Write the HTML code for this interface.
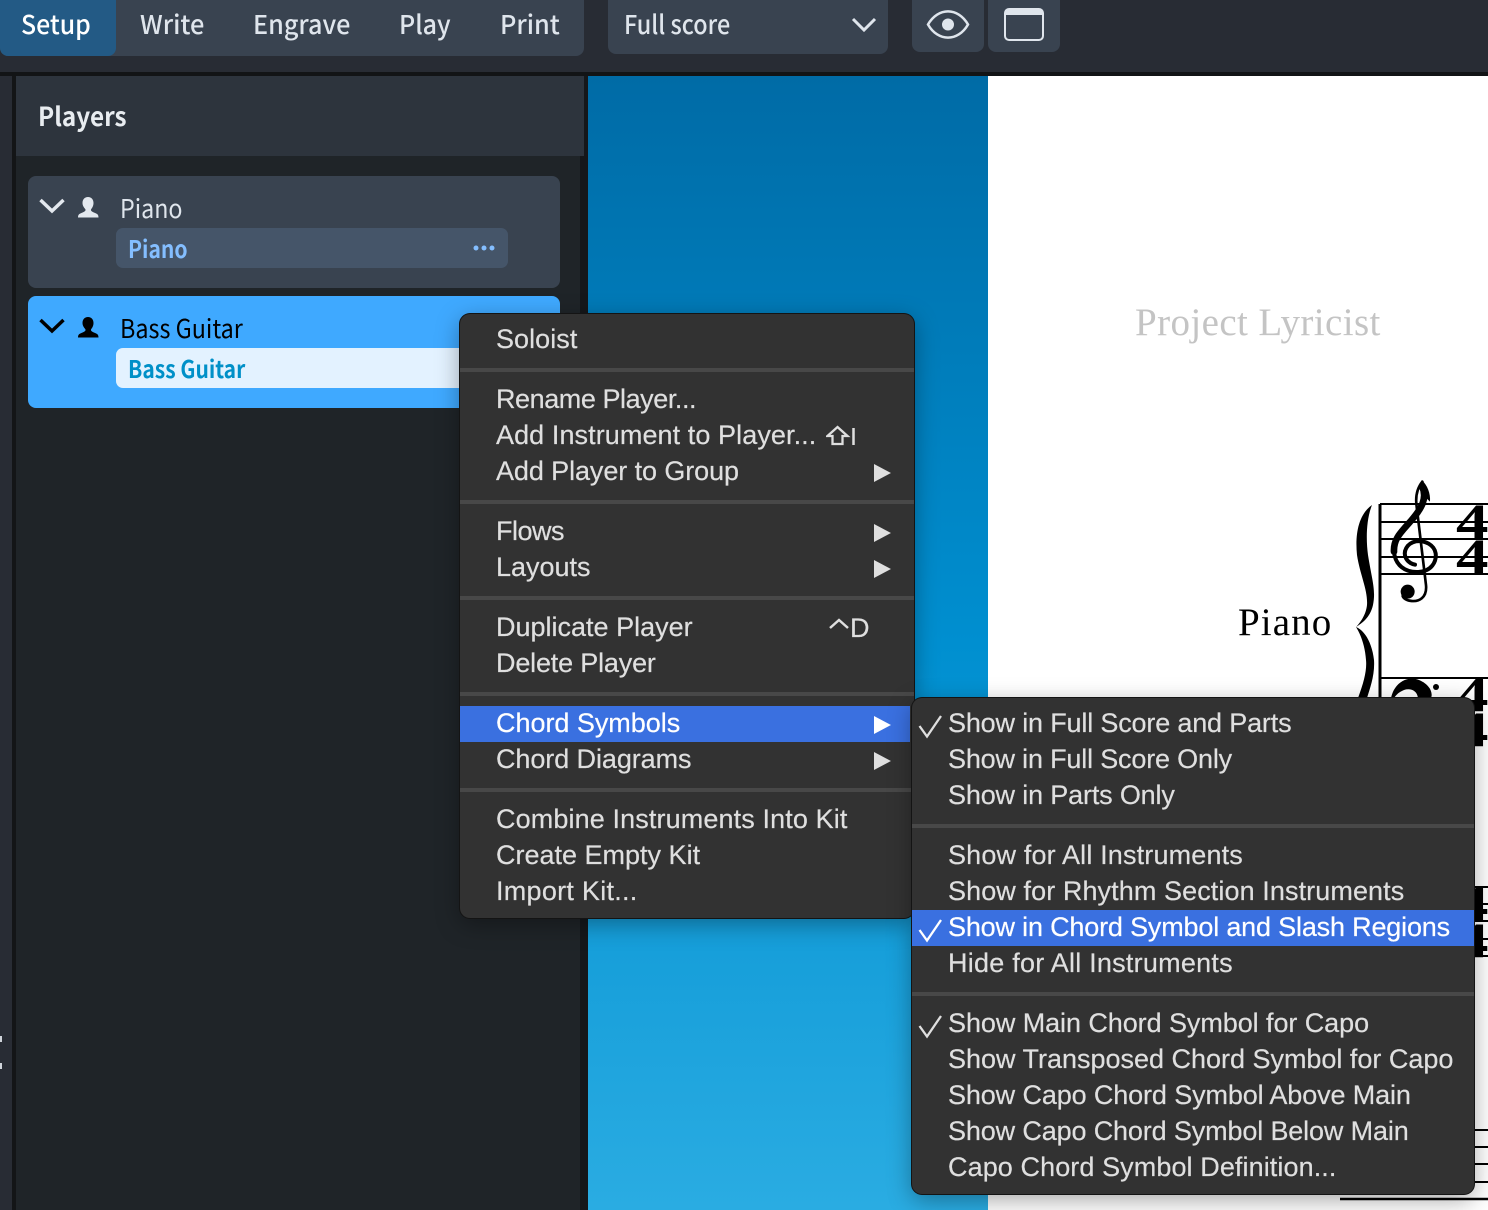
<!DOCTYPE html>
<html><head><meta charset="utf-8">
<style>
html,body{margin:0;padding:0;background:#282c34}
#r{position:relative;width:1488px;height:1210px;overflow:hidden;background:#1f2428}
#r div{position:absolute}
.ui{font-family:"Noto Sans CJK SC","Liberation Sans",sans-serif;font-weight:500;white-space:nowrap;line-height:40px;font-size:26px;transform-origin:left center}
.m{position:absolute;left:36px;height:36px;line-height:36px;font-family:"Liberation Sans",sans-serif;font-size:27px;color:#dfdfdf;white-space:nowrap;-webkit-text-stroke:.2px}
.s{position:absolute;left:0;right:0;height:4px;background:#484848}
.h{position:absolute;left:0;right:0;height:36px;background:#3a70e0}
.a{position:absolute;width:0;height:0;border-left:17px solid #dfdfdf;border-top:9px solid transparent;border-bottom:9px solid transparent}
.menu{position:absolute;background:#323232;border-radius:10px;box-shadow:0 0 0 1px #141414,0 6px 24px rgba(0,0,0,.35);overflow:hidden}
</style></head><body>
<div id="r">
<div style="left:0;top:0;width:1488px;height:72px;background:#282c34"></div>
<div style="left:0;top:72px;width:1488px;height:4px;background:#121416"></div>
<div style="left:0;top:0;width:584px;height:56px;background:#394350;border-radius:0 0 8px 8px"></div>
<div style="left:0;top:0;width:116px;height:56px;background:#235a85;border-radius:0 0 8px 8px"></div>
<div class="ui" style="left:21px;top:4px;color:#fff;transform:scaleX(.956)">Setup</div>
<div class="ui" style="left:140px;top:4px;color:#dfe5ec;transform:scaleX(.977)">Write</div>
<div class="ui" style="left:253px;top:4px;color:#dfe5ec;transform:scaleX(.969)">Engrave</div>
<div class="ui" style="left:399px;top:4px;color:#dfe5ec;transform:scaleX(.962)">Play</div>
<div class="ui" style="left:500px;top:4px;color:#dfe5ec;transform:scaleX(.972)">Print</div>
<div style="left:608px;top:0;width:280px;height:54px;background:#394350;border-radius:0 0 8px 8px"></div>
<div class="ui" style="left:624px;top:4px;color:#dfe5ec;transform:scaleX(.9)">Full score</div>
<svg style="position:absolute;left:850px;top:16px" width="28" height="18"><path d="M3 3 L14 14 L25 3" fill="none" stroke="#dfe5ec" stroke-width="3"/></svg>
<div style="left:912px;top:0;width:72px;height:52px;background:#394350;border-radius:0 0 8px 8px"></div>
<div style="left:988px;top:0;width:72px;height:52px;background:#394350;border-radius:0 0 8px 8px"></div>
<svg style="position:absolute;left:924px;top:8px" width="48" height="34"><path d="M4 16.500 C14 -1 34 -1 44 16.500 C34 34 14 34 4 16.500Z" fill="none" stroke="#dfe5ec" stroke-width="2.500"/><circle cx="24" cy="16.500" r="6" fill="#dfe5ec"/></svg>
<svg style="position:absolute;left:1003px;top:7px" width="42" height="35"><rect x="2" y="2" width="38" height="31" rx="4" fill="none" stroke="#dfe5ec" stroke-width="2"/><path d="M2 6a4 4 0 0 1 4-4h30a4 4 0 0 1 4 4v2h-38z" fill="#dfe5ec"/></svg>

<div style="left:0;top:76px;width:12px;height:1134px;background:#282c34"></div>
<div style="left:12px;top:76px;width:4px;height:1134px;background:#131517"></div>
<div style="left:0;top:1036px;width:2px;height:6px;background:#cfd4da"></div>
<div style="left:0;top:1063px;width:2px;height:6px;background:#cfd4da"></div>
<div style="left:16px;top:76px;width:568px;height:80px;background:#2d343d"></div>
<div style="left:580px;top:156px;width:8px;height:1054px;background:#15171a"></div>
<div style="left:584px;top:76px;width:4px;height:80px;background:#15171a"></div>
<div class="ui" style="left:38px;top:96px;color:#e8ecf0;font-weight:700;transform:scaleX(.935)">Players</div>

<div style="left:28px;top:176px;width:532px;height:112px;background:#394350;border-radius:8px"></div>
<div style="left:116px;top:228px;width:392px;height:40px;background:#455569;border-radius:7px"></div>
<svg style="position:absolute;left:38px;top:197px" width="28" height="20"><path d="M2.500 3 L14 14 L25.500 3" fill="none" stroke="#e3e8ee" stroke-width="3.500"/></svg>
<svg style="position:absolute;left:76px;top:196px" width="24" height="24"><path d="M12 1c3.500 0 5.500 2.500 5.500 6 0 3-1.500 5-2.500 6.500-.3 1.500 1 2.200 3.500 3.200 2.500 1 4 1.500 4 4.800H2c0-3.300 1.500-3.800 4-4.800 2.500-1 3.800-1.700 3.500-3.200C8.500 12 6.500 10 6.500 7 6.500 3.500 8.500 1 12 1z" fill="#e3e8ee"/></svg>
<div class="ui" style="left:120px;top:188px;color:#dfe5ec;font-weight:400;transform:scaleX(.894)">Piano</div>
<div class="ui" style="left:128px;top:228px;color:#84beff;font-size:24px;font-weight:700;transform:scaleX(.878)">Piano</div>
<svg style="position:absolute;left:472px;top:244px" width="24" height="8"><circle cx="4" cy="4" r="2.500" fill="#84beff"/><circle cx="12" cy="4" r="2.500" fill="#84beff"/><circle cx="20" cy="4" r="2.500" fill="#84beff"/></svg>

<div style="left:28px;top:296px;width:532px;height:112px;background:#3fa9ff;border-radius:8px"></div>
<div style="left:116px;top:348px;width:392px;height:40px;background:#e3f2ff;border-radius:7px"></div>
<svg style="position:absolute;left:38px;top:317px" width="28" height="20"><path d="M2.500 3 L14 14 L25.500 3" fill="none" stroke="#000" stroke-width="3.500"/></svg>
<svg style="position:absolute;left:76px;top:316px" width="24" height="24"><path d="M12 1c3.500 0 5.500 2.500 5.500 6 0 3-1.500 5-2.500 6.500-.3 1.500 1 2.200 3.500 3.200 2.500 1 4 1.500 4 4.800H2c0-3.300 1.500-3.800 4-4.800 2.500-1 3.800-1.700 3.500-3.200C8.500 12 6.500 10 6.500 7 6.500 3.500 8.500 1 12 1z" fill="#000"/></svg>
<div class="ui" style="left:120px;top:308px;color:#000;font-weight:400;transform:scaleX(.899)">Bass Guitar</div>
<div class="ui" style="left:128px;top:348px;color:#0090c8;font-size:24px;font-weight:700;transform:scaleX(.877)">Bass Guitar</div>

<div style="left:588px;top:76px;width:400px;height:1134px;background:linear-gradient(#006ba6,#008fd0 50%,#2aace2)"></div>
<div style="left:988px;top:76px;width:500px;height:1134px;background:#fff"></div>
<div style="left:1135px;top:298px;font:39px/50px 'Liberation Serif',serif;letter-spacing:.4px;color:#c4c4c4;white-space:nowrap">Project Lyricist</div>
<div style="left:1238px;top:598px;font:39px/50px 'Liberation Serif',serif;letter-spacing:1.100px;color:#000;white-space:nowrap">Piano</div>

<svg style="position:absolute;left:1340px;top:470px" width="148" height="740" viewBox="0 0 148 740">
<g stroke="#000" fill="none">
<path d="M40 34 V400" stroke-width="3"/>
<path d="M40 34H148M40 52H148M40 69H148M40 87H148M40 104H148" stroke-width="2"/>
<path d="M40 208H148" stroke-width="2"/>
<path d="M135 417H148M135 434H148M135 451H148M135 469H148M135 486H148" stroke-width="2"/>
<path d="M135 660H148M135 677H148M135 694H148M135 712H148M135 729H148" stroke-width="2"/>
<path d="M-55 729H148" stroke-width="2.500"/>
<path d="M-55 725V740" stroke-width="2.500"/>
</g>
<path d="M32 35 C18 45 15 65 17 85 C20 105 28 120 27 135 C26 145 20 153 16 157 C20 163 25 175 26 190 C27 200 24 212 18 228 L27 228 C30 218 35 205 34 190 C32 172 24 160 16 157 C22 153 30 148 33 135 C36 120 32 110 28 85 C26 70 26 50 32 35Z" fill="#000"/>
<g transform="scale(.3333)" fill="none" stroke="#000" stroke-linecap="round">
<path d="M247 50 C262 85 245 115 215 150 C185 185 160 205 162 245" stroke-width="20"/>
<path d="M162 245 C165 285 195 308 235 306 C275 304 290 275 287 250 C283 225 255 210 228 214 C200 220 188 245 198 265 C205 278 218 283 225 284" stroke-width="12"/>
<path d="M247 35 C235 50 225 75 230 110 L258 345 C262 385 235 395 215 393 C200 392 190 385 188 378" stroke-width="8"/>
<circle cx="203" cy="365" r="21" fill="#000" stroke="none"/>
<path d="M245 30 C262 45 272 70 270 95 L254 80 C252 60 248 45 245 30Z" fill="#000" stroke="none"/>
</g>
<g font-family="Liberation Serif,serif" font-size="50" font-weight="700" fill="#000">
<text transform="translate(116,68) scale(1.3,1)">4</text>
<text transform="translate(116,103) scale(1.3,1)">4</text>
<text transform="translate(116,241) scale(1.3,1)">4</text>
<text transform="translate(116,276) scale(1.3,1)">4</text>
<text transform="translate(116,450) scale(1.3,1)">4</text>
<text transform="translate(116,487) scale(1.3,1)">4</text>
</g>
<path d="M51 228 C55 210 70 206 79 210 C91 215 93 224 91 228 L78 228 C77 220 70 218 64 220 C59 222 56 225 54 228Z" fill="#000"/>
<circle cx="96" cy="217" r="3" fill="#000"/>
<path d="M-77 725 H-58 L-62 740 H-68Z" fill="#000"/>
<path d="M-40 722 C-30 730 -12 730 -7 722" fill="none" stroke="#000" stroke-width="3"/>
<path d="M-12 724 L-15 740" stroke="#000" stroke-width="3"/>
<circle cx="-28" cy="740" r="5" fill="#000"/>
</svg>

<div class="menu" style="left:460px;top:314px;width:454px;height:604px">
<span class="m" style="top:7px;letter-spacing:.05px">Soloist</span>
<div class="s" style="top:54px"></div>
<span class="m" style="top:67px;letter-spacing:-.44px">Rename Player...</span>
<span class="m" style="top:103px;letter-spacing:.08px">Add Instrument to Player...</span>
<svg style="position:absolute;left:366px;top:111px" width="32" height="22"><path d="M11.500 2 L21.500 11 H16.500 V19 H6.500 V11 H1.500Z" fill="none" stroke="#dfdfdf" stroke-width="2.300"/><path d="M27.500 3V20" stroke="#dfdfdf" stroke-width="2.500"/></svg>
<span class="m" style="top:139px;letter-spacing:-.09px">Add Player to Group</span>
<i class="a" style="left:414px;top:150px"></i>
<div class="s" style="top:186px"></div>
<span class="m" style="top:199px;letter-spacing:-.5px">Flows</span><i class="a" style="left:414px;top:210px"></i>
<span class="m" style="top:235px;letter-spacing:-.02px">Layouts</span><i class="a" style="left:414px;top:246px"></i>
<div class="s" style="top:282px"></div>
<span class="m" style="top:295px">Duplicate Player</span>
<span class="m" style="top:296px;left:369px"><svg style="position:absolute;left:0;top:8px" width="20" height="12"><path d="M1 10 L10 2 L19 10" fill="none" stroke="#dfdfdf" stroke-width="2.500"/></svg><span style="margin-left:21px">D</span></span>
<span class="m" style="top:331px;letter-spacing:-.18px">Delete Player</span>
<div class="s" style="top:378px"></div>
<div class="h" style="top:392px;right:4px"></div>
<span class="m" style="top:391px;color:#fff;letter-spacing:-.03px">Chord Symbols</span><i class="a" style="left:414px;top:402px;border-left-color:#fff"></i>
<span class="m" style="top:427px;letter-spacing:-.08px">Chord Diagrams</span><i class="a" style="left:414px;top:438px"></i>
<div class="s" style="top:474px"></div>
<span class="m" style="top:487px;letter-spacing:.12px">Combine Instruments Into Kit</span>
<span class="m" style="top:523px">Create Empty Kit</span>
<span class="m" style="top:559px;letter-spacing:.27px">Import Kit...</span>
</div>

<div class="menu" style="left:912px;top:698px;width:562px;height:496px">
<svg style="position:absolute;left:6px;top:17px" width="25" height="24"><path d="M1.500 11 L9 21.500 L23 1" fill="none" stroke="#dfdfdf" stroke-width="2.300"/></svg>
<span class="m" style="top:7px;letter-spacing:-.17px">Show in Full Score and Parts</span>
<span class="m" style="top:43px;letter-spacing:-.18px">Show in Full Score Only</span>
<span class="m" style="top:79px;letter-spacing:-.16px">Show in Parts Only</span>
<div class="s" style="top:126px"></div>
<span class="m" style="top:139px;letter-spacing:.16px">Show for All Instruments</span>
<span class="m" style="top:175px;letter-spacing:.09px">Show for Rhythm Section Instruments</span>
<div class="h" style="top:212px"></div>
<svg style="position:absolute;left:6px;top:221px" width="25" height="24"><path d="M1.500 11 L9 21.500 L23 1" fill="none" stroke="#fff" stroke-width="2.300"/></svg>
<span class="m" style="top:211px;color:#fff;letter-spacing:-.18px">Show in Chord Symbol and Slash Regions</span>
<span class="m" style="top:247px;letter-spacing:.24px">Hide for All Instruments</span>
<div class="s" style="top:294px"></div>
<svg style="position:absolute;left:6px;top:317px" width="25" height="24"><path d="M1.500 11 L9 21.500 L23 1" fill="none" stroke="#dfdfdf" stroke-width="2.300"/></svg>
<span class="m" style="top:307px;letter-spacing:-.07px">Show Main Chord Symbol for Capo</span>
<span class="m" style="top:343px;letter-spacing:-.01px">Show Transposed Chord Symbol for Capo</span>
<span class="m" style="top:379px;letter-spacing:-.12px">Show Capo Chord Symbol Above Main</span>
<span class="m" style="top:415px;letter-spacing:-.14px">Show Capo Chord Symbol Below Main</span>
<span class="m" style="top:451px;letter-spacing:.09px">Capo Chord Symbol Definition...</span>
</div>
</div>
</body></html>
